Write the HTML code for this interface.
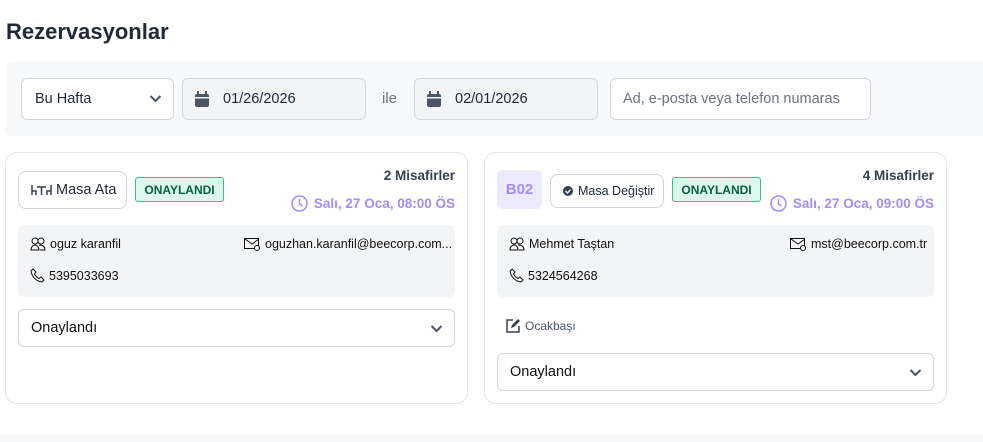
<!DOCTYPE html>
<html><head><meta charset="utf-8"><style>
*{box-sizing:border-box;margin:0;padding:0}
body{width:983px;height:442px;overflow:hidden;background:#fff;font-family:"Liberation Sans",sans-serif;color:#111827;position:relative}
.abs{position:absolute}
h1{position:absolute;left:6px;top:19px;font-size:22px;font-weight:700;color:#1f2937}
.filter{left:5px;top:62px;width:990px;height:74px;background:#f8f9fa;border-radius:6px}
.inp{position:absolute;top:78px;height:42px;border:1px solid #d1d5db;border-radius:6px;background:#fff;font-size:14.5px;display:flex;align-items:center;color:#1f2937}
.date{background:#f3f4f6}
.card{position:absolute;top:152px;width:463px;height:252px;border:1px solid #e5e7eb;border-radius:12px;background:#fff}
.btn{position:absolute;border:1px solid #d1d5db;border-radius:8px;background:#fff;display:flex;align-items:center;font-size:14.5px;color:#1f2937;white-space:nowrap}
.badge{position:absolute;background:#dcf7ec;border:1px solid #34c38f;border-radius:3px;color:#065f46;font-size:12px;font-weight:700;display:flex;align-items:center;justify-content:center}
.guest{position:absolute;font-size:13.5px;font-weight:700;color:#374151;text-align:right}
.time{position:absolute;font-size:13.5px;font-weight:700;color:#a78bfa;display:flex;align-items:center;gap:6px}
.info{position:absolute;left:12px;top:72px;width:437px;height:72px;background:#f3f4f6;border-radius:6px;font-size:12.5px;color:#111}
.row{position:absolute;display:flex;align-items:center;gap:4px}
.sel{position:absolute;height:38px;border:1px solid #d1d5db;border-radius:6px;font-size:14.5px;display:flex;align-items:center;padding-left:12px;color:#111}
</style></head><body>
<h1>Rezervasyonlar</h1>
<div class="abs filter"></div>
<div class="inp" style="left:21px;width:153px;padding-left:13px">Bu Hafta
<svg class="abs" style="left:127px;top:15px" width="13" height="10" viewBox="0 0 13 10"><path d="M1.5 2l5 5 5-5" stroke="#4b5563" stroke-width="2" fill="none"/></svg></div>
<div class="inp date" style="left:182px;width:184px;padding-left:40px">01/26/2026
<svg class="abs" style="left:12px;top:12px" width="14" height="16" viewBox="0 0 14 16"><rect x="0" y="3" width="14" height="13" rx="2" fill="#4b5563"/><rect x="2" y="0" width="2" height="4" fill="#4b5563"/><rect x="10" y="0" width="2" height="4" fill="#4b5563"/><rect x="0" y="6" width="14" height="1.5" fill="#f3f4f6"/></svg></div>
<div class="abs" style="left:382px;top:90px;font-size:15px;color:#6b7280">ile</div>
<div class="inp date" style="left:414px;width:184px;padding-left:40px">02/01/2026
<svg class="abs" style="left:12px;top:12px" width="14" height="16" viewBox="0 0 14 16"><rect x="0" y="3" width="14" height="13" rx="2" fill="#4b5563"/><rect x="2" y="0" width="2" height="4" fill="#4b5563"/><rect x="10" y="0" width="2" height="4" fill="#4b5563"/><rect x="0" y="6" width="14" height="1.5" fill="#f3f4f6"/></svg></div>
<div class="inp" style="left:610px;width:261px;padding-left:12px;color:#6b7280;white-space:nowrap;overflow:hidden">Ad, e-posta veya telefon numaras</div>

<div class="card" style="left:5px">
 <div class="btn" style="left:12px;top:18px;width:109px;height:38px;padding-left:12px;gap:4px">
  <svg width="21" height="12" viewBox="0 0 21 12"><path d="M1 1v10M1 7h4v4M20 1v10M20 7h-4v4M6 3h9M10.5 3v8" stroke="#374151" stroke-width="1.5" fill="none"/></svg>Masa Ata</div>
 <div class="badge" style="left:129px;top:24px;width:89px;height:25px">ONAYLANDI</div>
 <div class="guest" style="right:12px;top:15px">2 Misafirler</div>
 <div class="time" style="right:12px;top:42px"><svg width="17" height="17" viewBox="0 0 17 17"><circle cx="8.5" cy="8.5" r="7.5" stroke="#a78bfa" stroke-width="1.5" fill="none"/><path d="M8.5 4v5l3 2" stroke="#a78bfa" stroke-width="1.5" fill="none"/></svg>Salı, 27 Oca, 08:00 ÖS</div>
 <div class="info">
  <div class="row" style="left:12px;top:12px"><svg width="16" height="14" viewBox="0 0 16 14"><circle cx="5" cy="4" r="3" stroke="#111" fill="none"/><circle cx="11" cy="4" r="3" stroke="#111" fill="none"/><path d="M1 13c0-3 2-5 4-5s4 2 4 5zM9 8c3 0 6 1 6 5h-5" stroke="#111" fill="none"/></svg>oguz karanfil</div>
  <div class="row" style="left:226px;top:12px"><svg width="17" height="14" viewBox="0 0 17 14"><rect x="0.5" y="1.5" width="14" height="10" stroke="#111" fill="none"/><path d="M1 2l7 5 7-5" stroke="#111" fill="none"/><circle cx="13" cy="11" r="2.5" stroke="#111" fill="#f3f4f6"/></svg>oguzhan.karanfil@beecorp.com...</div>
  <div class="row" style="left:12px;top:43px"><svg width="15" height="15" viewBox="0 0 15 15"><path d="M3 1l3 3-1.5 2c1 2 2.5 3.5 4.5 4.5L11 9l3 3-2 2C6 13 2 9 1 3z" stroke="#111" fill="none"/></svg>5395033693</div>
 </div>
 <div class="sel" style="left:12px;top:156px;width:437px">Onaylandı
 <svg class="abs" style="right:11px;top:14px" width="13" height="10" viewBox="0 0 13 10"><path d="M1.5 2l5 5 5-5" stroke="#4b5563" stroke-width="2" fill="none"/></svg></div>
</div>

<div class="card" style="left:484px">
 <div class="abs" style="left:12px;top:17px;width:45px;height:39px;background:#ede9fe;border-radius:6px;color:#a78bfa;font-weight:700;font-size:15px;display:flex;align-items:center;justify-content:center">B02</div>
 <div class="btn" style="left:65px;top:21px;width:114px;height:34px;padding-left:12px;gap:5px;font-size:12.5px">
  <svg width="10" height="10" viewBox="0 0 10 10"><circle cx="5" cy="5" r="5" fill="#374151"/><path d="M2.5 5l2 2 3-3.5" stroke="#fff" stroke-width="1.3" fill="none"/></svg>Masa Değiştir</div>
 <div class="badge" style="left:187px;top:24px;width:89px;height:25px">ONAYLANDI</div>
 <div class="guest" style="right:12px;top:15px">4 Misafirler</div>
 <div class="time" style="right:12px;top:42px"><svg width="17" height="17" viewBox="0 0 17 17"><circle cx="8.5" cy="8.5" r="7.5" stroke="#a78bfa" stroke-width="1.5" fill="none"/><path d="M8.5 4v5l3 2" stroke="#a78bfa" stroke-width="1.5" fill="none"/></svg>Salı, 27 Oca, 09:00 ÖS</div>
 <div class="info">
  <div class="row" style="left:12px;top:12px"><svg width="16" height="14" viewBox="0 0 16 14"><circle cx="5" cy="4" r="3" stroke="#111" fill="none"/><circle cx="11" cy="4" r="3" stroke="#111" fill="none"/><path d="M1 13c0-3 2-5 4-5s4 2 4 5zM9 8c3 0 6 1 6 5h-5" stroke="#111" fill="none"/></svg>Mehmet Taştan</div>
  <div class="row" style="left:293px;top:12px"><svg width="17" height="14" viewBox="0 0 17 14"><rect x="0.5" y="1.5" width="14" height="10" stroke="#111" fill="none"/><path d="M1 2l7 5 7-5" stroke="#111" fill="none"/><circle cx="13" cy="11" r="2.5" stroke="#111" fill="#f3f4f6"/></svg>mst@beecorp.com.tr</div>
  <div class="row" style="left:12px;top:43px"><svg width="15" height="15" viewBox="0 0 15 15"><path d="M3 1l3 3-1.5 2c1 2 2.5 3.5 4.5 4.5L11 9l3 3-2 2C6 13 2 9 1 3z" stroke="#111" fill="none"/></svg>5324564268</div>
 </div>
 <div class="row" style="left:21px;top:165px;font-size:12px;color:#4b5563"><svg width="15" height="15" viewBox="0 0 15 15"><path d="M7 2H1v12h12V8" stroke="#374151" stroke-width="1.5" fill="none"/><path d="M5 10l1-3 6-6 2 2-6 6z" fill="#374151"/></svg>Ocakbaşı</div>
 <div class="sel" style="left:12px;top:200px;width:437px">Onaylandı
 <svg class="abs" style="right:11px;top:14px" width="13" height="10" viewBox="0 0 13 10"><path d="M1.5 2l5 5 5-5" stroke="#4b5563" stroke-width="2" fill="none"/></svg></div>
</div>
<div class="abs" style="left:0;top:434px;width:983px;height:8px;background:#f8f9fa"></div>
</body></html>
